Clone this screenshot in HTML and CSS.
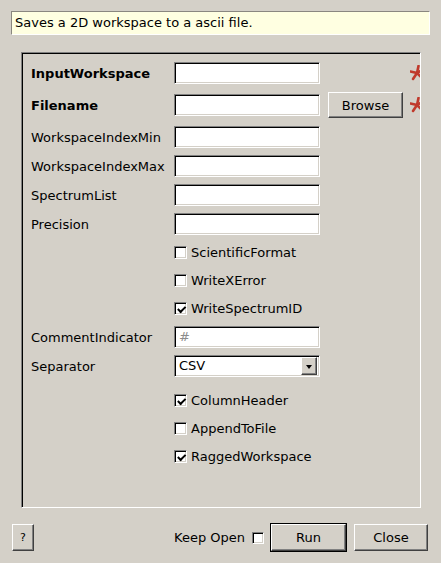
FILE: index.html
```html
<!DOCTYPE html>
<html>
<head>
<meta charset="utf-8">
<link rel="stylesheet" href="styles.css">
</head>
<body>
<div class="tip">Saves a 2D workspace to a ascii file.</div>
<div class="frame">
  <div class="grid">
    <div class="lbl bold">InputWorkspace</div>
    <div class="field"></div>
    <div></div>
    <div class="star"><svg width="16" height="16" viewBox="0 0 16 16"><g stroke="#c0392b" stroke-width="2.6" stroke-linecap="round"><line x1="7" y1="8" x2="8.5" y2="1"/><line x1="7" y1="8" x2="0.5" y2="6.5"/><line x1="7" y1="8" x2="3" y2="14"/><line x1="7" y1="8" x2="12" y2="13"/><line x1="7" y1="8" x2="13.5" y2="4"/></g></svg></div>

    <div class="lbl bold">Filename</div>
    <div class="field"></div>
    <div><button class="btn browse">Browse</button></div>
    <div class="star"><svg width="16" height="16" viewBox="0 0 16 16"><g stroke="#c0392b" stroke-width="2.6" stroke-linecap="round"><line x1="7" y1="8" x2="8.5" y2="1"/><line x1="7" y1="8" x2="0.5" y2="6.5"/><line x1="7" y1="8" x2="3" y2="14"/><line x1="7" y1="8" x2="12" y2="13"/><line x1="7" y1="8" x2="13.5" y2="4"/></g></svg></div>

    <div class="lbl">WorkspaceIndexMin</div>
    <div class="field"></div>
    <div></div><div></div>

    <div class="lbl">WorkspaceIndexMax</div>
    <div class="field"></div>
    <div></div><div></div>

    <div class="lbl">SpectrumList</div>
    <div class="field"></div>
    <div></div><div></div>

    <div class="lbl">Precision</div>
    <div class="field"></div>
    <div></div><div></div>

    <div></div>
    <div class="chk"><span class="box"></span>ScientificFormat</div>
    <div></div><div></div>

    <div></div>
    <div class="chk"><span class="box"></span>WriteXError</div>
    <div></div><div></div>

    <div></div>
    <div class="chk"><span class="box checked"></span>WriteSpectrumID</div>
    <div></div><div></div>

    <div class="lbl">CommentIndicator</div>
    <div class="field ph">#</div>
    <div></div><div></div>

    <div class="lbl">Separator</div>
    <div class="field combo"><span class="ctext">CSV</span><span class="arrow"><span class="tri"></span></span></div>
    <div></div><div></div>

    <div></div>
    <div class="chk gapped"><span class="box checked"></span>ColumnHeader</div>
    <div></div><div></div>

    <div></div>
    <div class="chk"><span class="box"></span>AppendToFile</div>
    <div></div><div></div>

    <div></div>
    <div class="chk"><span class="box checked"></span>RaggedWorkspace</div>
    <div></div><div></div>
  </div>
</div>
<div class="bottom">
  <button class="btn help">?</button>
  <div class="spacer"></div>
  <span class="keep">Keep Open</span>
  <span class="box small"></span>
  <span class="default"><button class="btn run">Run</button></span>
  <button class="btn close">Close</button>
</div>
</body>
</html>
```

FILE: styles.css
```css
html, body {
  margin: 0;
  padding: 0;
  background: #d4d0c8;
  font-family: "DejaVu Sans", sans-serif;
  font-size: 13px;
  color: #000;
}
body {
  padding: 11px 11px 0 11px;
  width: 441px;
  height: 563px;
  box-sizing: border-box;
  overflow: hidden;
}
.tip {
  height: 24px;
  box-sizing: border-box;
  background: #ffffe1;
  border-top: 1px solid #8a8780;
  border-left: 1px solid #8a8780;
  border-right: 1px solid #fff;
  border-bottom: 1px solid #fff;
  padding: 0 0 0 3px;
  line-height: 22px;
  width: 419px;
}
.frame {
  margin: 17px 0 0 10px;
  width: 400px;
  height: 456px;
  box-sizing: border-box;
  border-top: 1px solid #808080;
  border-left: 1px solid #808080;
  border-right: 1px solid #fff;
  border-bottom: 1px solid #fff;
  box-shadow: inset 1px 1px 0 #000, inset -1px -1px 0 #d4d0c8;
  overflow: hidden;
  padding: 9px 0 0 9px;
}
.grid {
  display: grid;
  grid-template-columns: 143px 146px 83px 20px;
  row-gap: 7px;
  align-items: center;
}
.lbl {
  white-space: nowrap;
}
.bold { font-weight: bold; }
.field {
  height: 22px;
  box-sizing: border-box;
  background: #fff;
  border-top: 1px solid #808080;
  border-left: 1px solid #808080;
  border-right: 1px solid #fff;
  border-bottom: 1px solid #fff;
  box-shadow: inset 1px 1px 0 #000, inset -1px -1px 0 #d4d0c8;
}
.ph {
  color: #8c8c8c;
  padding-left: 4px;
  line-height: 20px;
}
.combo {
  display: flex;
  align-items: center;
  padding: 2px;
}
.ctext {
  flex: 1;
  padding-left: 2px;
  line-height: 18px;
}
.arrow {
  width: 16px;
  height: 18px;
  box-sizing: border-box;
  background: #d4d0c8;
  border-top: 1px solid #fff;
  border-left: 1px solid #fff;
  border-right: 1px solid #404040;
  border-bottom: 1px solid #404040;
  box-shadow: inset -1px -1px 0 #808080;
  display: flex;
  align-items: center;
  justify-content: center;
}
.tri {
  width: 0;
  height: 0;
  border-left: 3.5px solid transparent;
  border-right: 3.5px solid transparent;
  border-top: 4px solid #000;
  margin-top: 1px;
}
.chk {
  display: flex;
  align-items: center;
  height: 21px;
  white-space: nowrap;
}
.chk.gapped { margin-top: 6px; }
.box {
  width: 13px;
  height: 13px;
  box-sizing: border-box;
  background: #fff;
  border-top: 1px solid #808080;
  border-left: 1px solid #808080;
  border-right: 1px solid #fff;
  border-bottom: 1px solid #fff;
  box-shadow: inset 1px 1px 0 #000, inset -1px -1px 0 #d4d0c8;
  margin-right: 4px;
  position: relative;
  flex: none;
}
.box.checked::after {
  content: "";
  position: absolute;
  left: 2px;
  top: 1px;
  width: 6px;
  height: 3px;
  border-left: 2px solid #000;
  border-bottom: 2px solid #000;
  transform: rotate(-45deg) translate(-1px, 2px);
}
.star {
  margin-left: 7px;
  height: 16px;
}
.star svg { display: block; }
.btn {
  font-family: "DejaVu Sans", sans-serif;
  font-size: 13px;
  color: #000;
  background: #d4d0c8;
  box-sizing: border-box;
  border-top: 1px solid #fff;
  border-left: 1px solid #fff;
  border-right: 1px solid #404040;
  border-bottom: 1px solid #404040;
  box-shadow: inset -1px -1px 0 #808080;
  padding: 0;
  margin: 0;
  display: block;
}
.browse {
  width: 75px;
  height: 26px;
  margin: 1px 0 1px 8px;
}
.bottom {
  display: flex;
  align-items: center;
  margin-top: 15px;
  padding-left: 1px;
  width: 419px;
  box-sizing: border-box;
  padding-right: 2px;
}
.help {
  width: 22px;
  height: 27px;
  font-size: 11px;
}
.spacer { flex: 1; }
.keep { margin-right: 7px; }
.box.small {
  width: 12px;
  height: 12px;
  margin-right: 6px;
}
.default {
  display: block;
  border: 1px solid #000;
}
.run {
  width: 75px;
  height: 27px;
}
.close {
  width: 74px;
  height: 27px;
  margin-left: 7px;
}
```
